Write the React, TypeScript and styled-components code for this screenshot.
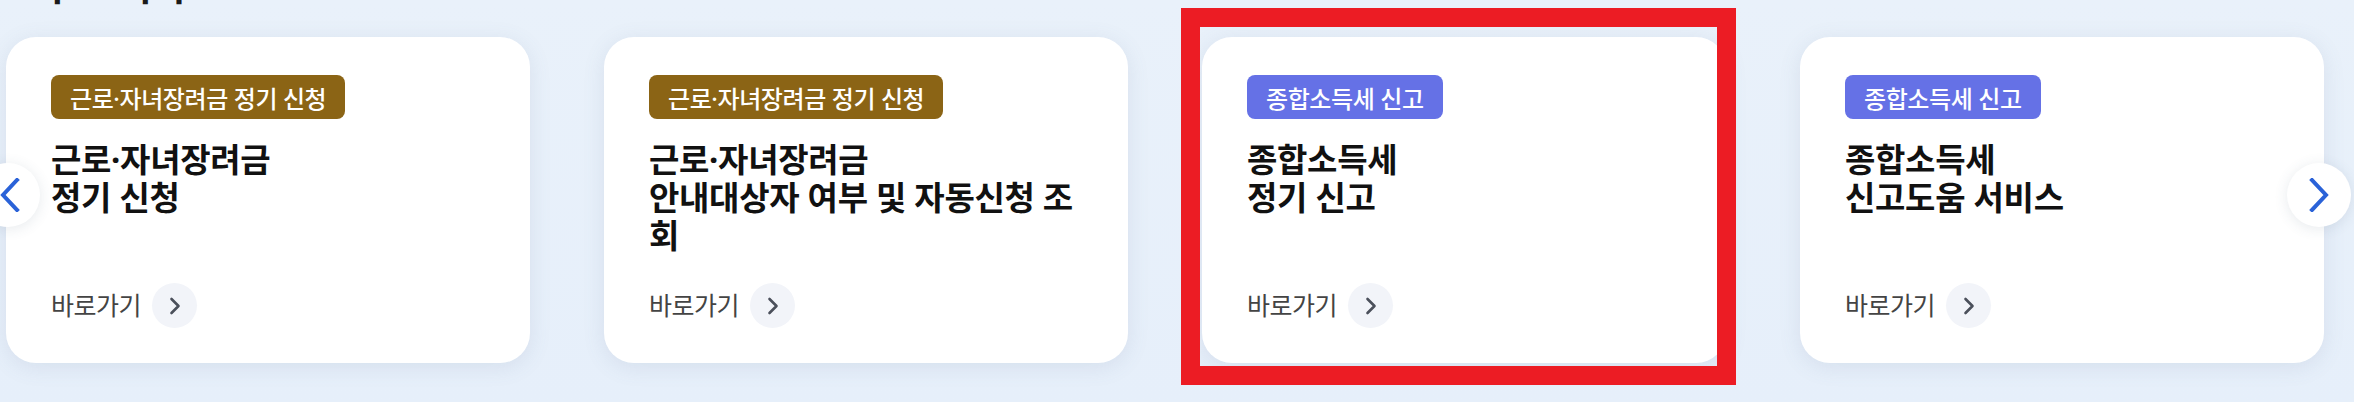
import React from "react";
import styled, { createGlobalStyle } from "styled-components";

const GlobalStyle = createGlobalStyle`
  html, body {
    margin: 0;
    padding: 0;
    background: #e8f1fb;
    font-family: "Noto Sans", "Noto Sans CJK KR", sans-serif;
  }
  * { box-sizing: border-box; }
`;

const Page = styled.div`
  position: relative;
  width: 2354px;
  height: 402px;
  overflow: hidden;
  background: linear-gradient(180deg, #e9f1fa 0%, #e6effa 100%);
`;

const Heading = styled.h2`
  margin: -36px 0 0 40px;
  font-size: 38px;
  line-height: 42px;
  font-weight: 700;
  color: #1a1a1a;
  letter-spacing: -1px;
`;

const Carousel = styled.div`
  position: relative;
  margin-top: 31px;
`;

const Track = styled.div`
  display: flex;
  gap: 74px;
  padding-left: 6px;
`;

const Card = styled.a`
  flex: 0 0 524px;
  height: 326px;
  background: #ffffff;
  border-radius: 30px;
  box-shadow: 0 4px 22px rgba(90, 110, 140, 0.12);
  padding: 38px 40px 35px 45px;
  display: flex;
  flex-direction: column;
  align-items: flex-start;
  text-decoration: none;
`;

const Tag = styled.span<{ $tone: "brown" | "blue" }>`
  display: inline-flex;
  align-items: center;
  height: 44px;
  padding: 0 19px;
  border-radius: 8px;
  background: ${(p) => (p.$tone === "brown" ? "#8b6415" : "#6571e6")};
  color: #ffffff;
  font-size: 24px;
  font-weight: 500;
  letter-spacing: -0.4px;
  white-space: nowrap;
`;

const Title = styled.h3`
  margin: 22px 0 0;
  font-size: 33px;
  line-height: 38px;
  font-weight: 700;
  color: #111111;
  letter-spacing: -0.3px;
  white-space: nowrap;
`;

const LinkRow = styled.div`
  margin-top: auto;
  display: flex;
  align-items: center;
  gap: 11px;
`;

const LinkText = styled.span`
  font-size: 25px;
  line-height: 45px;
  color: #444444;
  letter-spacing: -0.5px;
`;

const LinkCircle = styled.span`
  width: 45px;
  height: 45px;
  border-radius: 50%;
  background: #f2f4f9;
  display: flex;
  align-items: center;
  justify-content: center;
`;

const NavButton = styled.button<{ $side: "left" | "right" }>`
  position: absolute;
  top: 126px;
  ${(p) => (p.$side === "left" ? "left: -24px;" : "left: 2287px;")}
  width: 64px;
  height: 64px;
  border-radius: 50%;
  border: none;
  background: #ffffff;
  box-shadow: 0 2px 14px rgba(60, 80, 110, 0.12);
  display: flex;
  align-items: center;
  justify-content: center;
  padding: 0;
  cursor: pointer;
`;

const NavIconWrap = styled.span<{ $shift: number }>`
  display: flex;
  margin-left: ${(p) => p.$shift}px;
`;

const Highlight = styled.div`
  position: absolute;
  left: 1181px;
  top: 8px;
  width: 555px;
  height: 377px;
  border: 19px solid #ec1c24;
  pointer-events: none;
`;

const SmallChevron = () => (
  <svg width="12" height="18" viewBox="0 0 12 18" fill="none">
    <path d="M2.5 2 L9.5 9 L2.5 16" stroke="#4b505b" strokeWidth="2.6" strokeLinecap="round" strokeLinejoin="round" />
  </svg>
);

const NavChevron = ({ dir }: { dir: "left" | "right" }) => (
  <svg width="22" height="34" viewBox="0 0 22 34" fill="none">
    <path
      d={dir === "right" ? "M4 2 L18 17 L4 32" : "M18 2 L4 17 L18 32"}
      stroke="#2a62d8"
      strokeWidth="4"
      strokeLinecap="square"
      strokeLinejoin="miter"
    />
  </svg>
);

type Item = { tag: string; tone: "brown" | "blue"; lines: string[] };

const items: Item[] = [
  { tag: "근로·자녀장려금 정기 신청", tone: "brown", lines: ["근로·자녀장려금", "정기 신청"] },
  {
    tag: "근로·자녀장려금 정기 신청",
    tone: "brown",
    lines: ["근로·자녀장려금", "안내대상자 여부 및 자동신청 조", "회"],
  },
  { tag: "종합소득세 신고", tone: "blue", lines: ["종합소득세", "정기 신고"] },
  { tag: "종합소득세 신고", tone: "blue", lines: ["종합소득세", "신고도움 서비스"] },
];

export default function App() {
  return (
    <Page>
      <GlobalStyle />
      <Heading>주요 서비스</Heading>
      <Carousel>
        <Track>
          {items.map((it, i) => (
            <Card key={i} href="#">
              <Tag $tone={it.tone}>{it.tag}</Tag>
              <Title>
                {it.lines.map((l, j) => (
                  <React.Fragment key={j}>
                    {j > 0 && <br />}
                    {l}
                  </React.Fragment>
                ))}
              </Title>
              <LinkRow>
                <LinkText>바로가기</LinkText>
                <LinkCircle>
                  <SmallChevron />
                </LinkCircle>
              </LinkRow>
            </Card>
          ))}
        </Track>
        <NavButton $side="left" aria-label="이전">
          <NavIconWrap $shift={4}>
            <NavChevron dir="left" />
          </NavIconWrap>
        </NavButton>
        <NavButton $side="right" aria-label="다음">
          <NavIconWrap $shift={0}>
            <NavChevron dir="right" />
          </NavIconWrap>
        </NavButton>
      </Carousel>
      <Highlight />
    </Page>
  );
}
